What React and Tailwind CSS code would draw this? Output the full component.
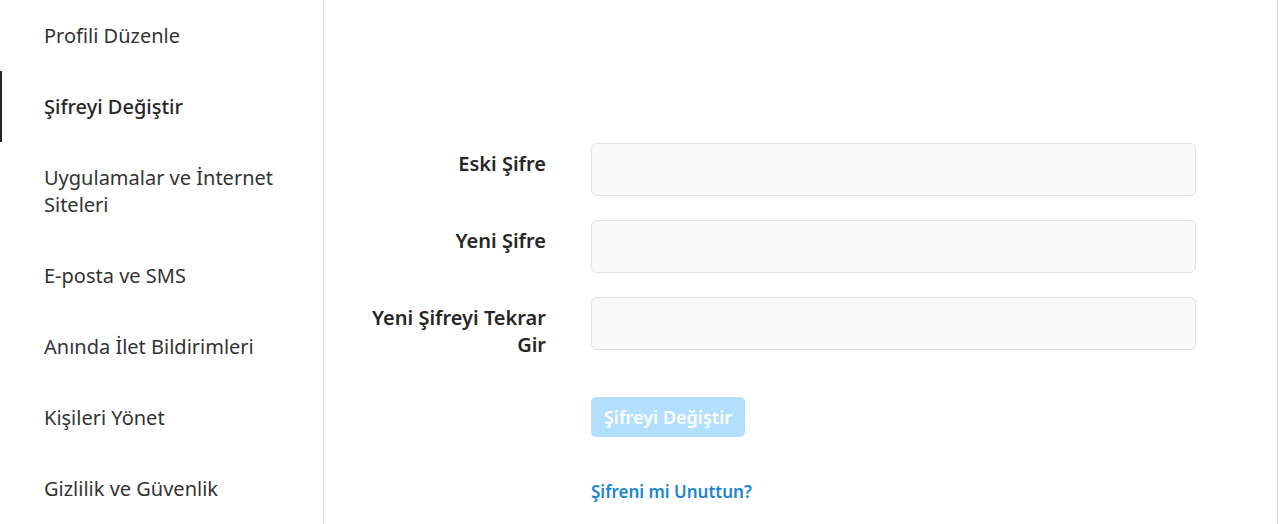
import React from "react";

const menuItems = [
  "Profili Düzenle",
  "Şifreyi Değiştir",
  "Uygulamalar ve İnternet Siteleri",
  "E-posta ve SMS",
  "Anında İlet Bildirimleri",
  "Kişileri Yönet",
  "Gizlilik ve Güvenlik",
];

const fields = [
  { id: "old", label: "Eski Şifre" },
  { id: "new", label: "Yeni Şifre" },
  { id: "confirm", label: "Yeni Şifreyi Tekrar Gir" },
];

const App = () => {
  const active = 1;

  return (
    <div
      className="min-h-screen bg-white text-[#262626]"
      style={{ fontFamily: '"Noto Sans", "Open Sans", sans-serif' }}
    >
      <div className="flex w-[1278px] h-[524px] border-r border-[#dbdbdb] overflow-hidden">
        {/* side menu */}
        <ul className="w-[324px] shrink-0 border-r border-[#dbdbdb]">
          {menuItems.map((item, i) => (
            <li
              key={item}
              className={
                i === active
                  ? "border-l-2 border-[#262626] pl-[42px] pr-12 py-[22px] text-[20px] leading-[27px] font-medium text-[#262626]"
                  : "border-l-2 border-transparent pl-[42px] pr-12 py-[22px] text-[20px] leading-[27px] text-[#333333]"
              }
            >
              {item}
            </li>
          ))}
        </ul>

        {/* form */}
        <div className="flex-1 pt-[143px]">
          <form className="flex flex-col gap-6" onSubmit={(e) => e.preventDefault()}>
            {fields.map((f) => (
              <div key={f.id} className="flex items-start">
                <label
                  htmlFor={f.id}
                  className="w-[222px] pl-10 pt-[7px] text-right text-[20px] leading-[27px] font-semibold text-[#262626]"
                >
                  {f.label}
                </label>
                <input
                  id={f.id}
                  type="password"
                  className="ml-[45px] w-[605px] h-[53px] rounded-[6px] border border-[#e0e0e0] bg-[#fafafa] px-3 outline-none"
                />
              </div>
            ))}

            <div className="flex flex-col pl-[267px] pt-[15px]">
              <button
                type="submit"
                disabled
                className="w-[154px] h-10 rounded-[5px] bg-[#b2dffc] text-white text-[18px] font-semibold"
              >
                Şifreyi Değiştir
              </button>
              <a
                href="#"
                className="mt-[43px] text-[17px] leading-6 font-semibold text-[#1b86d0]"
              >
                Şifreni mi Unuttun?
              </a>
            </div>
          </form>
        </div>
      </div>
    </div>
  );
};

export default App;
